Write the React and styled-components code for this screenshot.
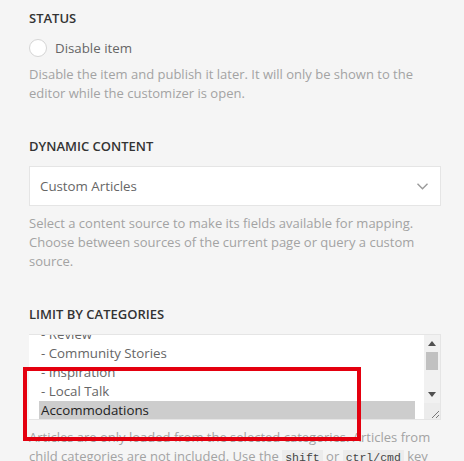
import React from 'react';
import styled, { createGlobalStyle } from 'styled-components';

const Global = createGlobalStyle`
  html, body { margin: 0; padding: 0; background: #f5f5f5; }
  body { font-family: "Open Sans", "Liberation Sans", sans-serif; }
`;

const Page = styled.div`
  width: 464px;
  height: 461px;
  overflow: hidden;
  padding: 8px 23px 0 29px;
  box-sizing: border-box;
  position: relative;
`;

const Section = styled.div`
  margin-bottom: 33px;
`;

const Heading = styled.div`
  font-size: 13px;
  line-height: 20px;
  font-weight: 600;
  color: #333;
  text-transform: uppercase;
  margin-bottom: 10px;
`;

const Help = styled.p`
  margin: 8px 0 0;
  font-size: 13px;
  line-height: 19px;
  color: #a3a3a3;
`;

const RadioRow = styled.label`
  display: flex;
  align-items: center;
  gap: 8px;
  height: 19px;
  font-size: 13.3px;
  color: #666;
`;

const Radio = styled.span`
  width: 16px;
  height: 16px;
  border-radius: 50%;
  background: #fff;
  border: 1px solid #d5d5d5;
  flex: none;
`;

const Select = styled.div`
  height: 40px;
  background: #fff;
  border: 1px solid #e5e5e5;
  box-sizing: border-box;
  display: flex;
  align-items: center;
  justify-content: space-between;
  padding: 0 12px 0 10px;
  font-size: 13.3px;
  color: #666;
`;

const ListBox = styled.div`
  height: 86px;
  background: #fff;
  border: 1px solid #e5e5e5;
  border-left: none;
  box-sizing: border-box;
  display: flex;
  overflow: hidden;
`;

const Options = styled.div`
  flex: 1;
  padding: 0 9px 0 10px;
  overflow: hidden;
`;

const OptionList = styled.div`
  margin-top: -10px;
`;

const Option = styled.div`
  height: 19px;
  line-height: 19px;
  font-size: 13.3px;
  padding-left: 2px;
  color: ${p => (p.$selected ? '#222' : '#666')};
  background: ${p => (p.$selected ? '#cdcdcd' : 'transparent')};
`;

const Scrollbar = styled.div`
  width: 16px;
  display: flex;
  flex-direction: column;
  background: #f1f1f1;
`;

const Arrow = styled.div`
  height: 17px;
  display: flex;
  align-items: center;
  justify-content: center;
`;

const Track = styled.div`
  flex: 1;
  padding: 0 2px;
`;

const Thumb = styled.div`
  height: 18px;
  background: #c1c1c1;
`;

const Corner = styled.div`
  height: 16px;
  background: #ececec;
  display: flex;
  align-items: flex-end;
  justify-content: flex-end;
`;

const Code = styled.code`
  font-family: "Liberation Mono", "DejaVu Sans Mono", monospace;
  font-size: 11.5px;
  color: #444;
  background: #ececec;
  padding: 1px 3px;
`;

const Highlight = styled.div`
  position: absolute;
  left: 23px;
  top: 367px;
  width: 338px;
  height: 74px;
  border: 4px solid #e4000f;
  box-sizing: border-box;
  pointer-events: none;
`;

const Triangle = ({ up }) => (
  <svg width="8" height="5" viewBox="0 0 8 5">
    <path d={up ? 'M0 5 L4 0 L8 5 Z' : 'M0 0 L4 5 L8 0 Z'} fill="#505050" />
  </svg>
);

export default function App() {
  return (
    <Page>
      <Global />
      <Section>
        <Heading>Status</Heading>
        <RadioRow>
          <Radio />
          Disable item
        </RadioRow>
        <Help>
          Disable the item and publish it later. It will only be shown to the editor while the
          customizer is open.
        </Help>
      </Section>

      <Section>
        <Heading>Dynamic Content</Heading>
        <Select>
          Custom Articles
          <svg width="11" height="7" viewBox="0 0 11 7">
            <path d="M0.5 0.8 L5.5 5.8 L10.5 0.8" fill="none" stroke="#9a9a9a" strokeWidth="1.4" />
          </svg>
        </Select>
        <Help>
          Select a content source to make its fields available for mapping. Choose between sources
          of the current page or query a custom source.
        </Help>
      </Section>

      <Section>
        <Heading>Limit by Categories</Heading>
        <ListBox>
          <Options>
            <OptionList>
              <Option>- Review</Option>
              <Option>- Community Stories</Option>
              <Option>- Inspiration</Option>
              <Option>- Local Talk</Option>
              <Option $selected>Accommodations</Option>
            </OptionList>
          </Options>
          <Scrollbar>
            <Arrow>
              <Triangle up />
            </Arrow>
            <Track>
              <Thumb />
            </Track>
            <Arrow>
              <Triangle />
            </Arrow>
            <Corner>
              <svg width="10" height="10" viewBox="0 0 10 10">
                <path d="M2 9 L9 2 M6 9 L9 6" stroke="#777" strokeWidth="1" />
              </svg>
            </Corner>
          </Scrollbar>
        </ListBox>
        <Help>
          Articles are only loaded from the selected categories. Articles from child categories are
          not included. Use the <Code>shift</Code> or <Code>ctrl/cmd</Code> key
        </Help>
      </Section>
      <Highlight />
    </Page>
  );
}
